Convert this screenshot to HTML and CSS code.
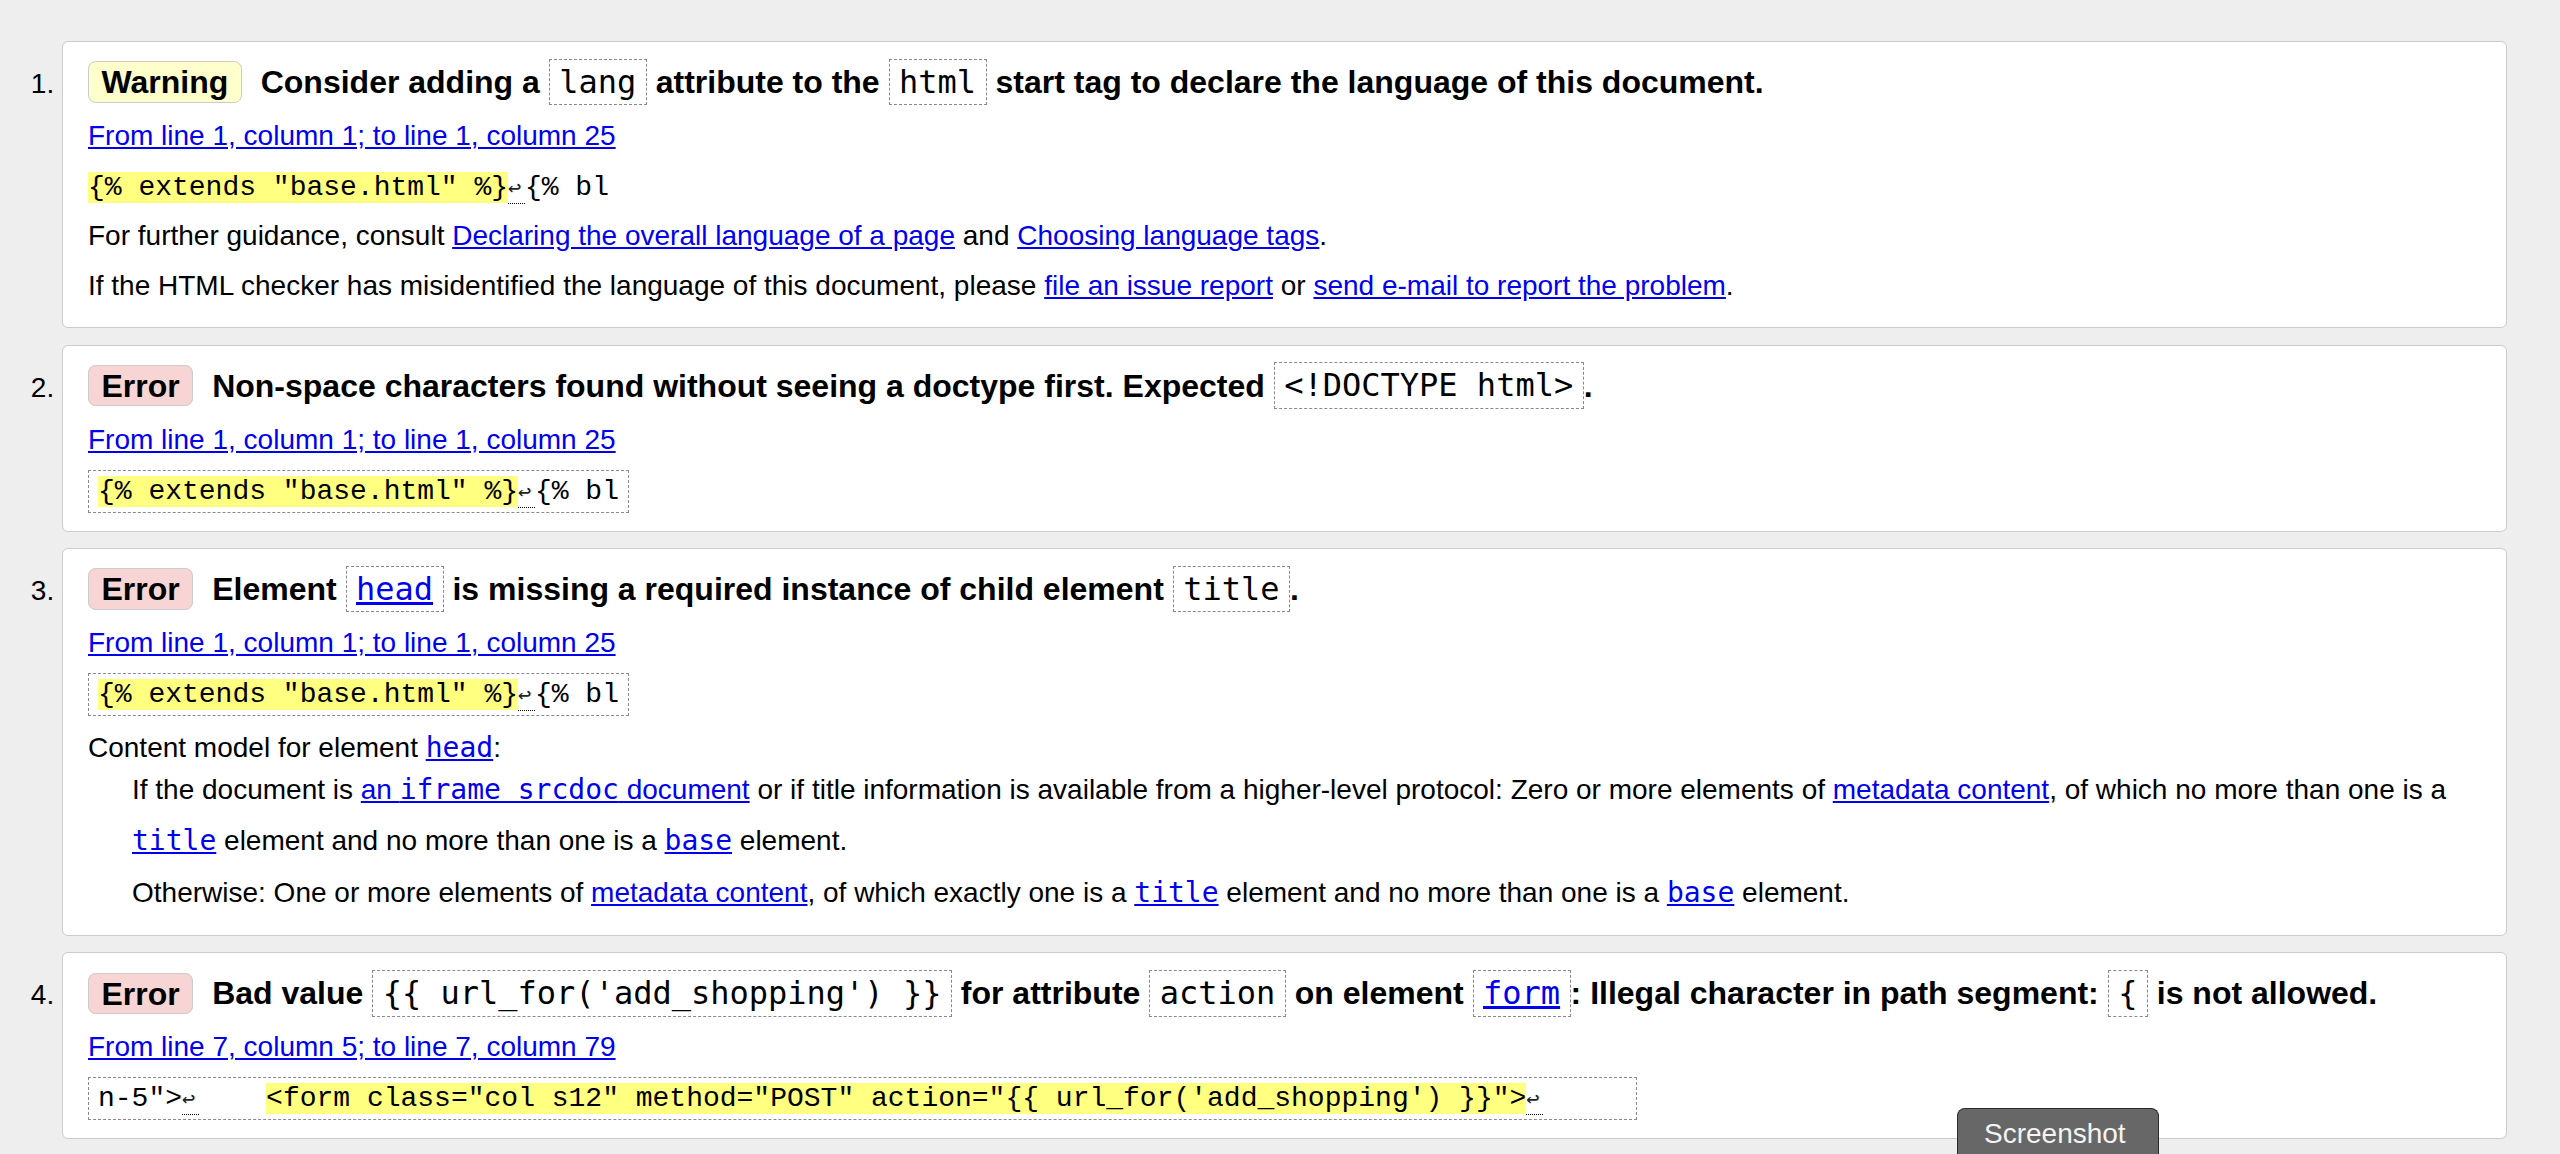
FILE: index.html
```html
<!DOCTYPE html>
<html lang="en">
<head>
<meta charset="utf-8">
<title>Validation results</title>
<link rel="stylesheet" href="styles.css">
</head>
<body>
<ol class="results">
  <li class="msg warning">
    <p class="msg-title"><strong class="badge">Warning</strong> Consider adding a <code class="tok">lang</code> attribute to the <code class="tok">html</code> start tag to declare the language of this document.</p>
    <p class="row"><a href="#l1">From line 1, column 1; to line 1, column 25</a></p>
    <p class="row"><code class="extract"><b>{% extends "base.html" %}</b><span class="lf" title="U+000A LINE FEED">↩</span>{% bl</code></p>
    <p class="row">For further guidance, consult <a href="#decl">Declaring the overall language of a page</a> and <a href="#tags">Choosing language tags</a>.</p>
    <p class="row">If the HTML checker has misidentified the language of this document, please <a href="#issue">file an issue report</a> or <a href="#mail">send e-mail to report the problem</a>.</p>
  </li>
  <li class="msg error">
    <p class="msg-title"><strong class="badge">Error</strong> Non-space characters found without seeing a doctype first. Expected <code class="tok">&lt;!DOCTYPE html&gt;</code>.</p>
    <p class="row"><a href="#l1">From line 1, column 1; to line 1, column 25</a></p>
    <p class="row"><code class="extract boxed"><b>{% extends "base.html" %}</b><span class="lf" title="U+000A LINE FEED">↩</span>{% bl</code></p>
  </li>
  <li class="msg error">
    <p class="msg-title"><strong class="badge">Error</strong> Element <code class="tok"><a href="#head">head</a></code> is missing a required instance of child element <code class="tok">title</code>.</p>
    <p class="row"><a href="#l1">From line 1, column 1; to line 1, column 25</a></p>
    <p class="row"><code class="extract boxed"><b>{% extends "base.html" %}</b><span class="lf" title="U+000A LINE FEED">↩</span>{% bl</code></p>
    <dl class="model">
      <dt>Content model for element <a href="#head"><code class="mono">head</code></a>:</dt>
      <dd>If the document is <a href="#srcdoc">an <code class="mono">iframe srcdoc</code> document</a> or if title information is available from a higher-level protocol: Zero or more elements of <a href="#meta">metadata content</a>, of which no more than one is a <a href="#title"><code class="mono">title</code></a> element and no more than one is a <a href="#base"><code class="mono">base</code></a> element.</dd>
      <dd>Otherwise: One or more elements of <a href="#meta">metadata content</a>, of which exactly one is a <a href="#title"><code class="mono">title</code></a> element and no more than one is a <a href="#base"><code class="mono">base</code></a> element.</dd>
    </dl>
  </li>
  <li class="msg error">
    <p class="msg-title"><strong class="badge">Error</strong> Bad value <code class="tok">{{ url_for('add_shopping') }}</code> for attribute <code class="tok">action</code> on element <code class="tok"><a href="#form">form</a></code>: Illegal character in path segment: <code class="tok">{</code> is not allowed.</p>
    <p class="row"><a href="#l7">From line 7, column 5; to line 7, column 79</a></p>
    <p class="row"><code class="extract boxed">n-5"&gt;<span class="lf" title="U+000A LINE FEED">↩</span>    <b>&lt;form class="col s12" method="POST" action="{{ url_for('add_shopping') }}"&gt;</b><span class="lf" title="U+000A LINE FEED">↩</span>     </code></p>
  </li>
</ol>
<div class="shot-tip">Screenshot</div>
</body>
</html>
```

FILE: styles.css
```css
html {
  background: #eeeeee;
}

body {
  margin: 0;
  position: relative;
  height: 1154px;
  overflow: hidden;
  background: #eeeeee;
  color: #000;
  font-family: "Liberation Sans", Arial, Helvetica, sans-serif;
  font-size: 28px;
}

a {
  color: #0000ee;
}

.results {
  margin: 0;
  padding: 41px 53px 0 62px;
  list-style: decimal outside;
}

.msg {
  background: #ffffff;
  border: 1px solid #cccccc;
  border-radius: 6px;
  padding: 15px 24px 16px 25px;
  margin-bottom: 16.5px;
}

.msg:last-child {
  margin-bottom: 0;
}

p {
  margin: 0;
}

.row {
  line-height: 50px;
}

.msg-title {
  font-size: 32px;
  font-weight: bold;
  line-height: 50px;
  margin-bottom: 4px;
}

.badge {
  padding: 1.6px 12.5px;
  border: 1px solid #cccccc;
  border-radius: 8px;
  margin-right: 10px;
}

.warning .badge {
  background: #ffffcc;
}

.error .badge {
  background: #f7d5d5;
}

.tok {
  font-family: "DejaVu Sans Mono", monospace;
  font-size: 32px;
  font-weight: normal;
  border: 1px dashed #8a8a8a;
  padding: 3.4px 9.5px;
}

.mono {
  font-family: "DejaVu Sans Mono", monospace;
  font-size: 28px;
}

.extract {
  font-family: "Liberation Mono", "Courier New", monospace;
  font-size: 28px;
  line-height: 28px;
  white-space: pre;
}

.extract.boxed {
  border: 1px dashed #8a8a8a;
  padding: 5px 9px;
}

.extract b {
  font-weight: normal;
  background: #ffff80;
}

.lf {
  font-family: "DejaVu Sans Mono", monospace;
  font-size: 22px;
  letter-spacing: 3.6px;
  padding-bottom: 3px;
  color: #222;
  border-bottom: 1px dotted #000000;
}

.model {
  margin: 12.35px 0 0;
}

.model dt {
  line-height: 35px;
}

.model dd {
  margin: 0 0 0 44px;
  line-height: 50.5px;
}

.model dd + dd {
  margin-top: 2px;
}

.shot-tip {
  position: absolute;
  left: 1957px;
  top: 1108px;
  width: 202px;
  height: 46px;
  box-sizing: border-box;
  padding-left: 26px;
  background: #676767;
  border: 1.5px solid #2b2b2b;
  border-bottom: 0;
  border-radius: 8px 8px 0 0;
  color: #f4f4f4;
  font-size: 28px;
  line-height: 50px;
}
```
